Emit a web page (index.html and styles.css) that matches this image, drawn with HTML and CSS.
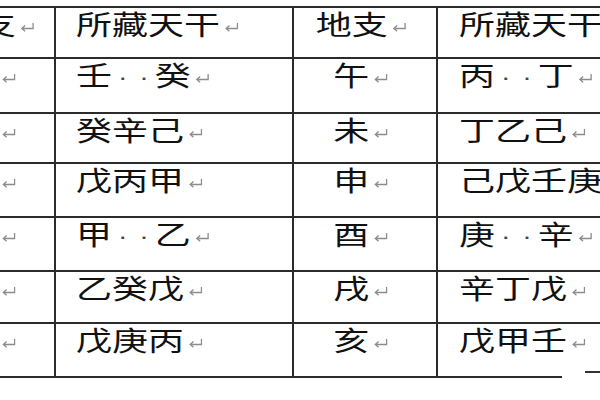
FILE: index.html
```html
<!DOCTYPE html>
<html lang="zh">
<head>
<meta charset="utf-8">
<title>地支所藏天干</title>
<link rel="stylesheet" href="styles.css">
</head>
<body>
<div class="page">
  <div class="grid">
    <div class="c c1"><span class="t">地支<svg class="ret" viewBox="0 0 15 10" preserveAspectRatio="none"><path d="M13.5 1V6.5H2.5M5.5 3.5L2.2 6.5L5.5 9.2"/></svg></span></div>
    <div class="c c2"><span class="t">所藏天干<svg class="ret" viewBox="0 0 15 10" preserveAspectRatio="none"><path d="M13.5 1V6.5H2.5M5.5 3.5L2.2 6.5L5.5 9.2"/></svg></span></div>
    <div class="c c3"><span class="t">地支<svg class="ret" viewBox="0 0 15 10" preserveAspectRatio="none"><path d="M13.5 1V6.5H2.5M5.5 3.5L2.2 6.5L5.5 9.2"/></svg></span></div>
    <div class="c c4"><span class="t">所藏天干</span></div>

    <div class="c c1"><span class="t">子<svg class="ret" viewBox="0 0 15 10" preserveAspectRatio="none"><path d="M13.5 1V6.5H2.5M5.5 3.5L2.2 6.5L5.5 9.2"/></svg></span></div>
    <div class="c c2"><span class="t">壬<span class="dot">·</span><span class="dot">·</span>癸<svg class="ret" viewBox="0 0 15 10" preserveAspectRatio="none"><path d="M13.5 1V6.5H2.5M5.5 3.5L2.2 6.5L5.5 9.2"/></svg></span></div>
    <div class="c c3"><span class="t">午<svg class="ret" viewBox="0 0 15 10" preserveAspectRatio="none"><path d="M13.5 1V6.5H2.5M5.5 3.5L2.2 6.5L5.5 9.2"/></svg></span></div>
    <div class="c c4"><span class="t">丙<span class="dot">·</span><span class="dot">·</span>丁<svg class="ret" viewBox="0 0 15 10" preserveAspectRatio="none"><path d="M13.5 1V6.5H2.5M5.5 3.5L2.2 6.5L5.5 9.2"/></svg></span></div>

    <div class="c c1"><span class="t">丑<svg class="ret" viewBox="0 0 15 10" preserveAspectRatio="none"><path d="M13.5 1V6.5H2.5M5.5 3.5L2.2 6.5L5.5 9.2"/></svg></span></div>
    <div class="c c2"><span class="t">癸辛己<svg class="ret" viewBox="0 0 15 10" preserveAspectRatio="none"><path d="M13.5 1V6.5H2.5M5.5 3.5L2.2 6.5L5.5 9.2"/></svg></span></div>
    <div class="c c3"><span class="t">未<svg class="ret" viewBox="0 0 15 10" preserveAspectRatio="none"><path d="M13.5 1V6.5H2.5M5.5 3.5L2.2 6.5L5.5 9.2"/></svg></span></div>
    <div class="c c4"><span class="t">丁乙己<svg class="ret" viewBox="0 0 15 10" preserveAspectRatio="none"><path d="M13.5 1V6.5H2.5M5.5 3.5L2.2 6.5L5.5 9.2"/></svg></span></div>

    <div class="c c1"><span class="t">寅<svg class="ret" viewBox="0 0 15 10" preserveAspectRatio="none"><path d="M13.5 1V6.5H2.5M5.5 3.5L2.2 6.5L5.5 9.2"/></svg></span></div>
    <div class="c c2"><span class="t">戊丙甲<svg class="ret" viewBox="0 0 15 10" preserveAspectRatio="none"><path d="M13.5 1V6.5H2.5M5.5 3.5L2.2 6.5L5.5 9.2"/></svg></span></div>
    <div class="c c3"><span class="t">申<svg class="ret" viewBox="0 0 15 10" preserveAspectRatio="none"><path d="M13.5 1V6.5H2.5M5.5 3.5L2.2 6.5L5.5 9.2"/></svg></span></div>
    <div class="c c4"><span class="t">己戊壬庚</span></div>

    <div class="c c1"><span class="t">卯<svg class="ret" viewBox="0 0 15 10" preserveAspectRatio="none"><path d="M13.5 1V6.5H2.5M5.5 3.5L2.2 6.5L5.5 9.2"/></svg></span></div>
    <div class="c c2"><span class="t">甲<span class="dot">·</span><span class="dot">·</span>乙<svg class="ret" viewBox="0 0 15 10" preserveAspectRatio="none"><path d="M13.5 1V6.5H2.5M5.5 3.5L2.2 6.5L5.5 9.2"/></svg></span></div>
    <div class="c c3"><span class="t">酉<svg class="ret" viewBox="0 0 15 10" preserveAspectRatio="none"><path d="M13.5 1V6.5H2.5M5.5 3.5L2.2 6.5L5.5 9.2"/></svg></span></div>
    <div class="c c4"><span class="t">庚<span class="dot">·</span><span class="dot">·</span>辛<svg class="ret" viewBox="0 0 15 10" preserveAspectRatio="none"><path d="M13.5 1V6.5H2.5M5.5 3.5L2.2 6.5L5.5 9.2"/></svg></span></div>

    <div class="c c1"><span class="t">辰<svg class="ret" viewBox="0 0 15 10" preserveAspectRatio="none"><path d="M13.5 1V6.5H2.5M5.5 3.5L2.2 6.5L5.5 9.2"/></svg></span></div>
    <div class="c c2"><span class="t">乙癸戊<svg class="ret" viewBox="0 0 15 10" preserveAspectRatio="none"><path d="M13.5 1V6.5H2.5M5.5 3.5L2.2 6.5L5.5 9.2"/></svg></span></div>
    <div class="c c3"><span class="t">戌<svg class="ret" viewBox="0 0 15 10" preserveAspectRatio="none"><path d="M13.5 1V6.5H2.5M5.5 3.5L2.2 6.5L5.5 9.2"/></svg></span></div>
    <div class="c c4"><span class="t">辛丁戊<svg class="ret" viewBox="0 0 15 10" preserveAspectRatio="none"><path d="M13.5 1V6.5H2.5M5.5 3.5L2.2 6.5L5.5 9.2"/></svg></span></div>

    <div class="c c1"><span class="t">巳<svg class="ret" viewBox="0 0 15 10" preserveAspectRatio="none"><path d="M13.5 1V6.5H2.5M5.5 3.5L2.2 6.5L5.5 9.2"/></svg></span></div>
    <div class="c c2"><span class="t">戊庚丙<svg class="ret" viewBox="0 0 15 10" preserveAspectRatio="none"><path d="M13.5 1V6.5H2.5M5.5 3.5L2.2 6.5L5.5 9.2"/></svg></span></div>
    <div class="c c3"><span class="t">亥<svg class="ret" viewBox="0 0 15 10" preserveAspectRatio="none"><path d="M13.5 1V6.5H2.5M5.5 3.5L2.2 6.5L5.5 9.2"/></svg></span></div>
    <div class="c c4"><span class="t">戊甲壬<svg class="ret" viewBox="0 0 15 10" preserveAspectRatio="none"><path d="M13.5 1V6.5H2.5M5.5 3.5L2.2 6.5L5.5 9.2"/></svg></span></div>
  </div>
  <div class="bottom"><div class="edge"></div><div class="dash"></div></div>
</div>
</body>
</html>
```
FILE: styles.css
```css
html, body {
  margin: 0;
  padding: 0;
  background: #fff;
}
body {
  width: 600px;
  height: 400px;
  overflow: hidden;
  font-family: "Noto Sans CJK SC", "Noto Sans CJK JP", sans-serif;
  color: #111;
}
.page {
  padding-top: 6px;
}
.grid {
  display: grid;
  grid-template-columns: 122px 236px 142px 240px;
  grid-template-rows: 49px 53px 48px 52px 52px 50px 52px;
  gap: 2px;
  padding: 2px 2px 0;
  background: #2b2b2b;
  margin-left: -70px;
  width: max-content;
}
.c {
  background: #fff;
  font-size: 27px;
  font-weight: 400;
  line-height: 30px;
  padding-top: 1px;
  white-space: nowrap;
  overflow: hidden;
}
.c1, .c3 {
  text-align: center;
  padding-right: 8px;
}
.c2 {
  padding-left: 20px;
}
.c4 {
  padding-left: 21px;
}
.t {
  display: inline-block;
  transform: scaleX(1.333);
  transform-origin: left center;
}
.c1 .t, .c3 .t {
  transform-origin: center center;
}
.dot {
  display: inline-flex;
  justify-content: center;
  width: 16px;
  overflow: visible;
  font-family: "DejaVu Sans", sans-serif;
  font-size: 20px;
  color: #444;
}
.ret {
  width: 11.25px;
  height: 10px;
  margin-left: 3px;
  vertical-align: 3px;
  fill: none;
  stroke: #8c8c8c;
  stroke-width: 1.3;
}
.bottom {
  display: flex;
  align-items: flex-start;
}
.edge {
  width: 632px;
  height: 2px;
  margin-left: -70px;
  background: #2b2b2b;
  flex: none;
}
.dash {
  width: 20px;
  height: 2px;
  margin-left: 23px;
  margin-top: -5px;
  background: #333;
  flex: none;
}
```
